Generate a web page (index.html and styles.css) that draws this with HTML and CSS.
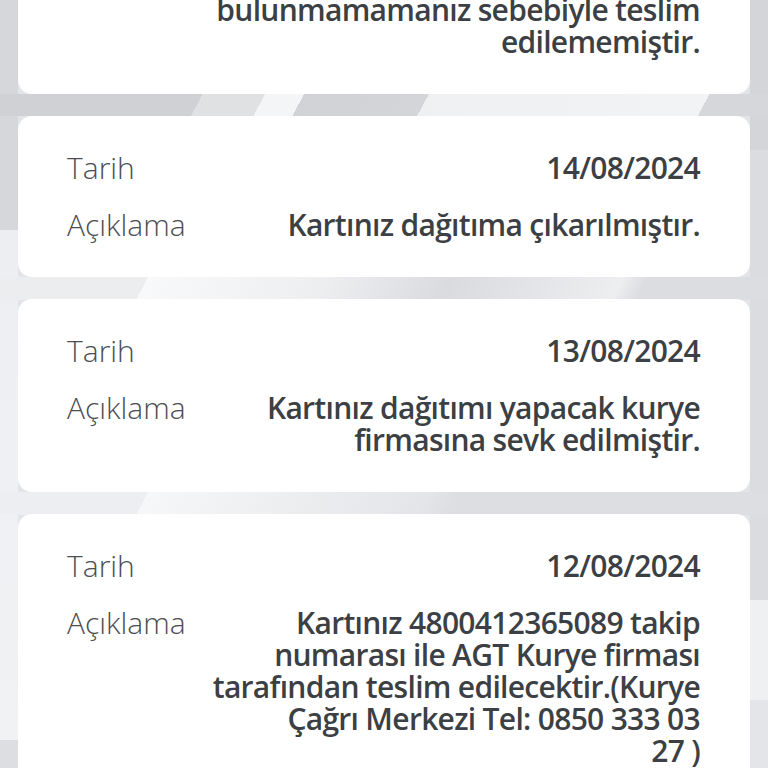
FILE: index.html
```html
<!DOCTYPE html>
<html lang="tr">
  <head>
    <meta charset="UTF-8" />
    <meta
      name="viewport"
      content="width=device-width, initial-scale=1.0"
    />
    <title>Kart Teslimat Durumu</title>
    <link rel="stylesheet" href="styles.css">
  </head>

  <body>
    <div class="history">
      <div class="card">
        <div class="label">Tarih</div>
        <div class="value">15/08/2024</div>
        <div class="label">Açıklama</div>
        <div class="value">Kartınız teslimat adresinizde bulunmamamanız sebebiyle teslim edilememiştir.</div>
      </div>

      <div class="card">
        <div class="label">Tarih</div>
        <div class="value">14/08/2024</div>
        <div class="label">Açıklama</div>
        <div class="value">Kartınız dağıtıma çıkarılmıştır.</div>
      </div>

      <div class="card">
        <div class="label">Tarih</div>
        <div class="value">13/08/2024</div>
        <div class="label">Açıklama</div>
        <div class="value">Kartınız dağıtımı yapacak kurye firmasına sevk edilmiştir.</div>
      </div>

      <div class="card">
        <div class="label">Tarih</div>
        <div class="value">12/08/2024</div>
        <div class="label">Açıklama</div>
        <div class="value">Kartınız 4800412365089 takip numarası ile AGT Kurye firması tarafından teslim edilecektir.(Kurye Çağrı Merkezi Tel: 0850 333 03<br>27 )</div>
      </div>
    </div>
  </body>
</html>
```
FILE: styles.css
```css
body {
  margin: 0;
  height: 768px;
  overflow: hidden;
  font-family: 'Open Sans', 'Noto Sans', sans-serif;
  background-color: #e2e4e7;
  /* arka plandaki egik seritler */
  background-image:
    linear-gradient(118deg, #cfd1d4 0%, #cfd1d4 26%, #dfe1e3 26%, #dfe1e3 34%, #f4f5f7 34%, #f4f5f7 39%, #d0d2d5 39%, #d3d5d8 55%, #eef0f2 55%, #f2f3f5 91%, #d5d7da 91%),
    linear-gradient(118deg, #ebedef 0%, #ebedef 19%, #f8f9fa 19%, #eceef0 42%, #dadbde 58%, #eceef0 80%, #dbdde0 83%),
    linear-gradient(118deg, #eceef1 0%, #eceef1 19%, #f6f7f8 19%, #e4e5e8 55%, #dcdee1 59%, #dcdee1 100%),
    linear-gradient(180deg, #d5d7da 0, #d5d7da 230px, #eceef1 230px, #f0f2f4 740px, #dcdee1 740px),
    linear-gradient(180deg, #d3d5d8 0, #d3d5d8 150px, #dadcdf 150px, #dadcdf 600px, #eef0f2 600px, #eef0f2 700px, #e3e5e8 700px);
  background-size:
    100% 22px,
    100% 23px,
    100% 23px,
    18px 100%,
    18px 100%;
  background-position:
    0 94px,
    0 277px,
    0 492px,
    left top,
    right top;
  background-repeat: no-repeat;
}

.history {
  display: flex;
  flex-direction: column;
  gap: 22px;
  margin-top: -131px;
  padding: 0 18px;
}

.card {
  display: grid;
  grid-template-columns: auto 1fr;
  row-gap: 25px;
  column-gap: 20px;
  padding: 36px 50px 36px 49px;
  background-color: #ffffff;
  border-radius: 14px;
}

.label {
  font-size: 30px;
  line-height: 32px;
  font-weight: 300;
  color: #4b4e52;
}

.value {
  justify-self: end;
  max-width: 496px;
  text-align: right;
  font-size: 30px;
  line-height: 32px;
  font-weight: 600;
  letter-spacing: -0.7px;
  color: #3c3f43;
}
```
